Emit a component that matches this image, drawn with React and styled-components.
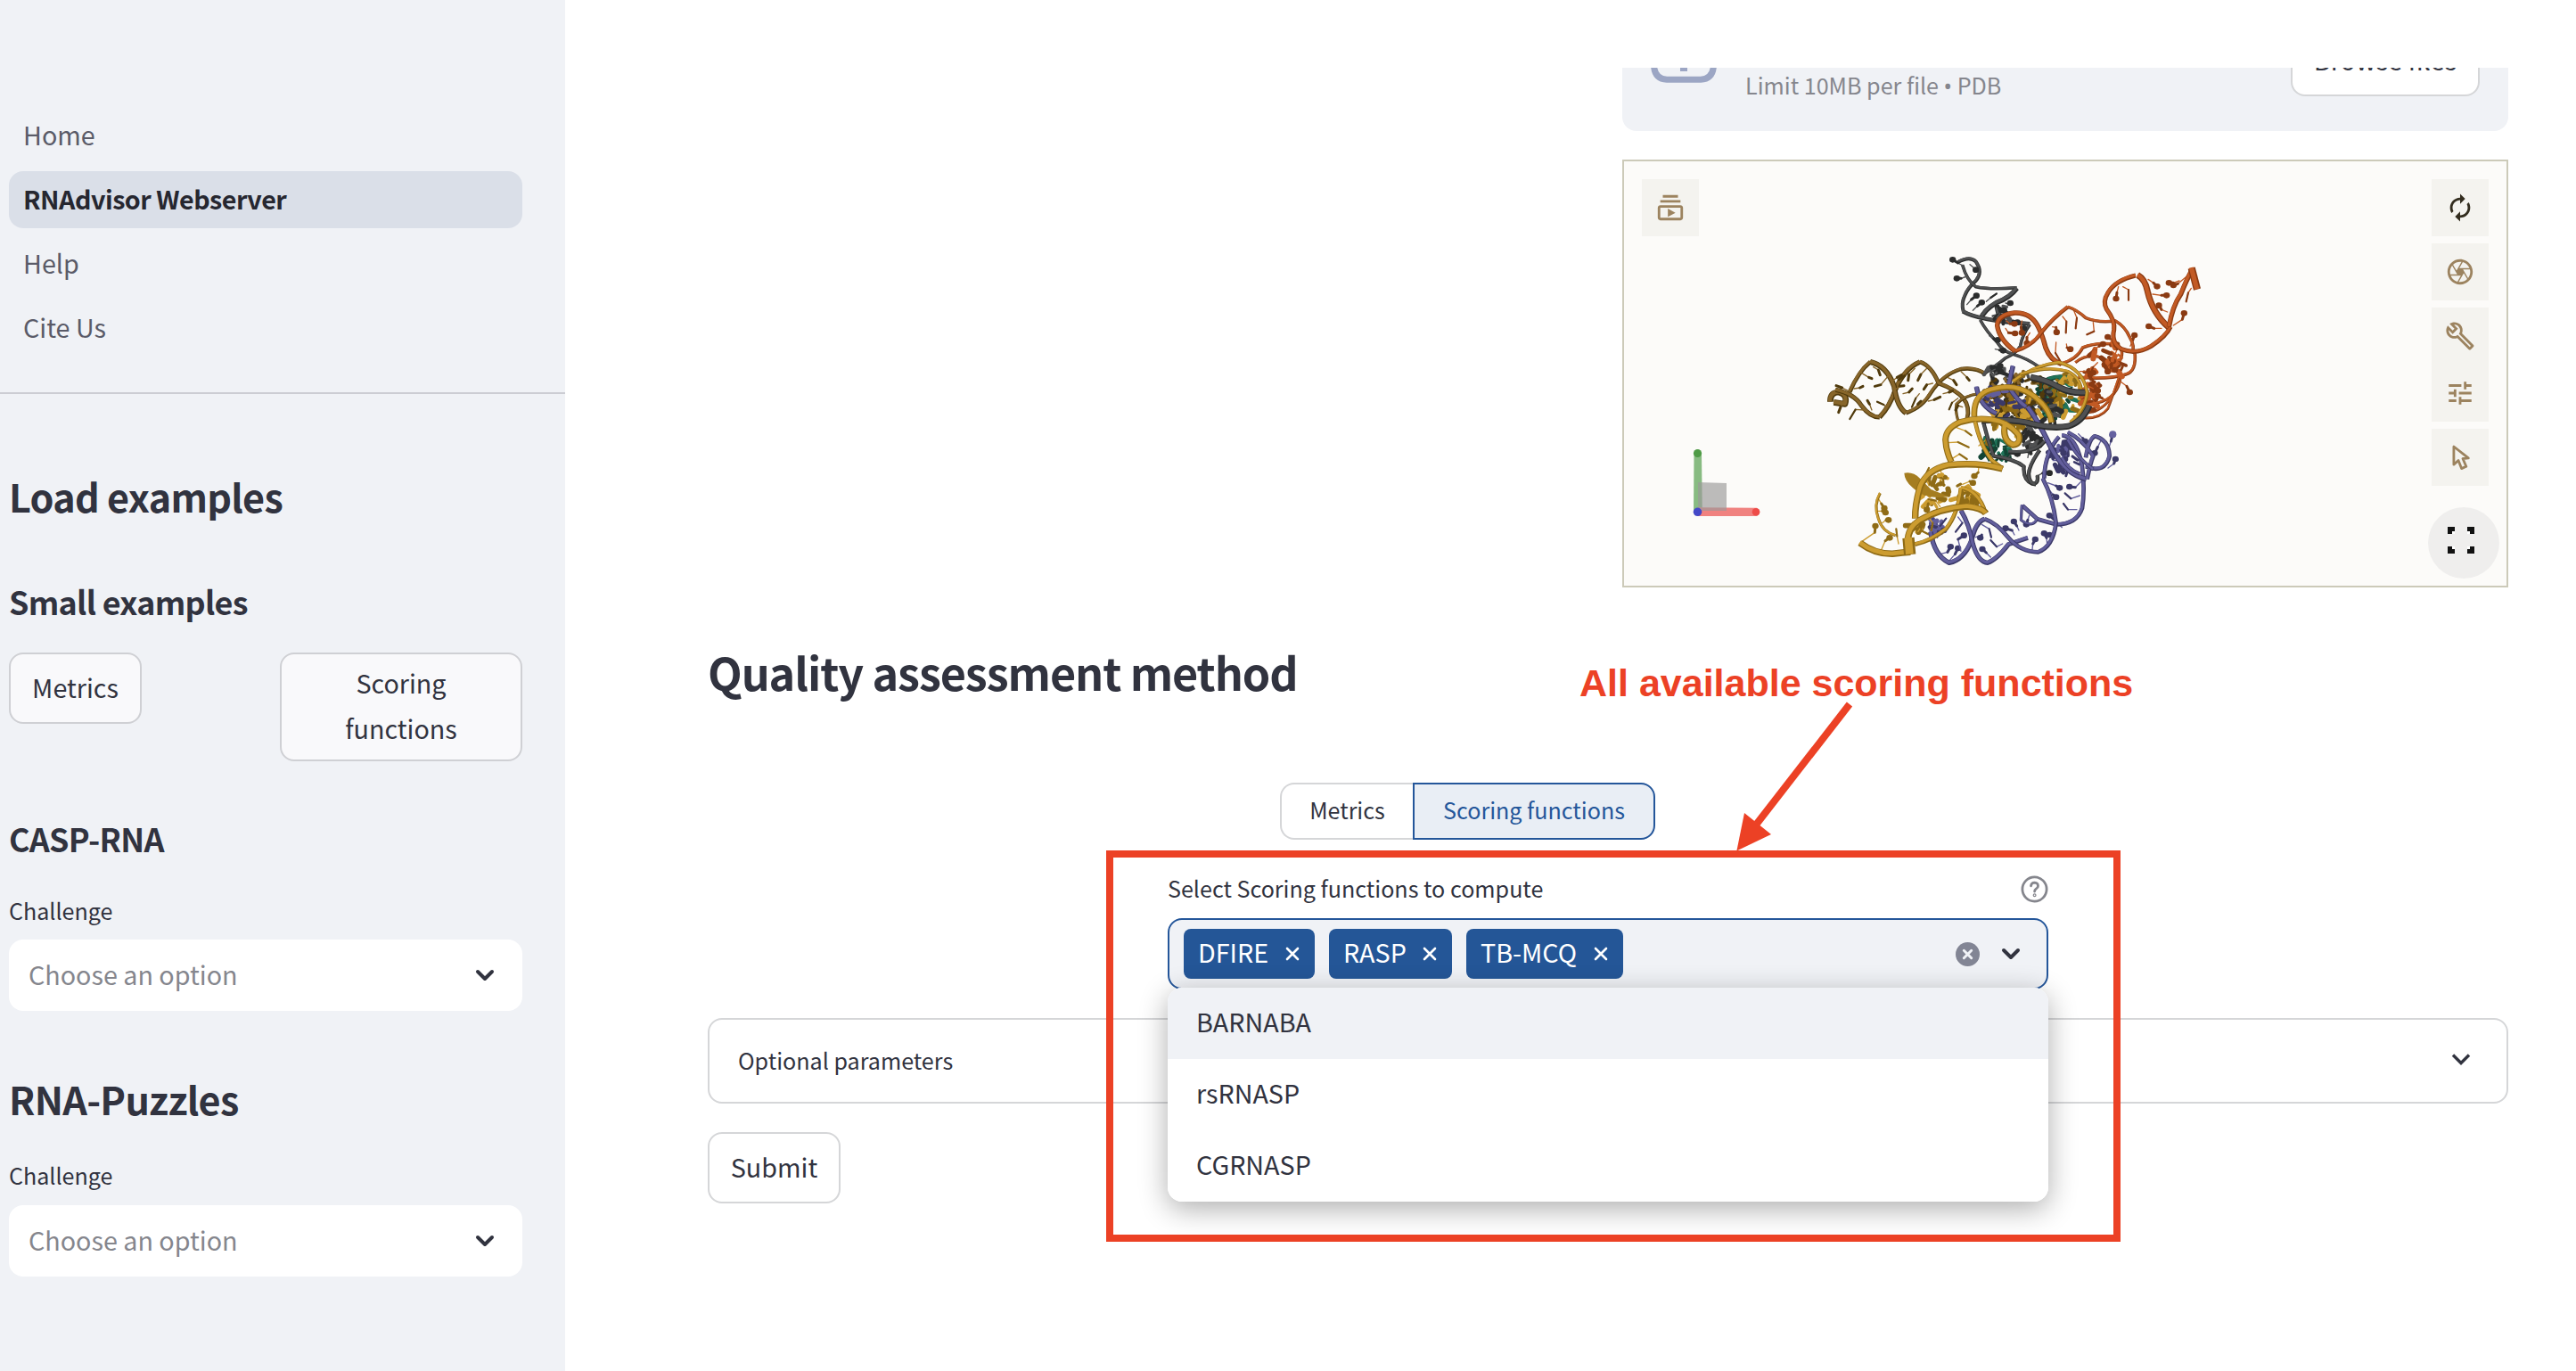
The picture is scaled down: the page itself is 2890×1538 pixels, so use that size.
import React from "react";
import styled, { createGlobalStyle } from "styled-components";
import {
  MdOutlineSubscriptions,
  MdAutorenew,
  MdOutlineCamera,
  MdOutlineBuild,
  MdTune,
} from "react-icons/md";

const ink = "#31333f";
const muted = "#85868d";
const panel = "#f0f2f6";
const blue = "#24569a";
const line = "#d5d6d8";
const red = "#ec4125";

const GlobalStyle = createGlobalStyle`
  *, *::before, *::after { box-sizing: border-box; }
  html, body { margin: 0; padding: 0; background: #fff; }
  body {
    font-family: "Noto Sans CJK SC", "Noto Sans", sans-serif;
    font-size: 28.7px;
    color: ${ink};
    overflow: hidden;
  }
  h1, h2, h3, p { margin: 0; }
  button { font: inherit; color: inherit; margin: 0; }
  svg { display: block; flex: none; }
`;

const Page = styled.div`
  position: relative;
  display: flex;
  width: 2890px;
  height: 1538px;
  overflow: hidden;
`;

/* ---------- sidebar ---------- */

const Sidebar = styled.aside`
  width: 634px;
  flex: none;
  background: ${panel};
  padding-top: 120px;
`;

const Nav = styled.nav`
  display: flex;
  flex-direction: column;
  gap: 8px;
  padding: 0 48px 40px 10px;
  border-bottom: 2px solid #cccdd3;
`;

const NavItem = styled.a`
  height: 64px;
  line-height: 62px;
  padding: 0 16px;
  border-radius: 16px;
  white-space: nowrap;
  color: ${(p) => (p.$active ? "#262730" : "#5a5b68")};
  background: ${(p) => (p.$active ? "#dadfe8" : "transparent")};
  font-weight: ${(p) => (p.$active ? 700 : 400)};
  letter-spacing: ${(p) => (p.$active ? "-0.5px" : "0")};
`;

const SidebarBody = styled.div`
  display: flex;
  flex-direction: column;
  padding: 0 48px 0 10px;
`;

const Heading = styled.h2`
  font-size: ${(p) => p.$size}px;
  line-height: ${(p) => p.$line}px;
  margin-top: ${(p) => p.$top}px;
  letter-spacing: ${(p) => p.$track || -0.72}px;
  font-weight: 700;
  white-space: nowrap;
`;

const Label = styled.label`
  display: block;
  font-size: 25.1px;
  line-height: 40px;
  margin-top: ${(p) => p.$top || 0}px;
  white-space: nowrap;
`;

const ButtonRow = styled.div`
  display: flex;
  justify-content: space-between;
  align-items: flex-start;
  margin-top: 34px;
  height: 122px;
`;

const Button = styled.button`
  flex: none;
  display: flex;
  align-items: center;
  justify-content: center;
  width: ${(p) => p.$width}px;
  height: ${(p) => p.$height || 80}px;
  margin-top: ${(p) => p.$top || 0}px;
  padding: 0 10px 4px;
  line-height: 51px;
  text-align: center;
  white-space: nowrap;
  border: 2px solid ${(p) => (p.$soft ? "#cfd0d4" : line)};
  border-radius: 16px;
  background: ${(p) => (p.$soft ? "#f9f9fb" : "#fff")};
`;

const SelectBox = styled.div`
  display: flex;
  align-items: center;
  justify-content: space-between;
  height: 80px;
  margin-top: ${(p) => p.$top}px;
  padding: 0 31px 0 22px;
  border-radius: 16px;
  background: #fff;
  color: ${muted};
`;

const Lifted = styled.span`
  padding-bottom: ${(p) => p.$by || 4}px;
  white-space: nowrap;
`;

/* ---------- main ---------- */

const Main = styled.main`
  flex: 1;
  display: flex;
  flex-direction: column;
  padding: 76px 76px 0 160px;
`;

const RightColumn = styled.div`
  width: 994px;
  margin-left: auto;
`;

const UploadClip = styled.div`
  height: 71px;
  overflow: hidden;
  display: flex;
  flex-direction: column;
  justify-content: flex-end;
`;

const Uploader = styled.div`
  flex: none;
  display: flex;
  align-items: center;
  height: 158px;
  padding: 0 32px;
  border-radius: 16px;
  background: ${panel};
`;

const UploadHint = styled.span`
  flex: 1;
  margin: 55px 0 0 32px;
  font-size: 25.1px;
  line-height: 38px;
  color: ${muted};
  white-space: nowrap;
`;

const Bullet = styled.span`
  font-family: "Noto Sans", sans-serif;
`;

const Viewer = styled.section`
  position: relative;
  display: flex;
  justify-content: space-between;
  height: 480px;
  margin-top: 32px;
  padding: 20px;
  border: 2px solid #cccab9;
  background: #fcfbf9;
`;

const ToolColumn = styled.div`
  display: flex;
  flex-direction: column;
  gap: 8px;
  align-items: center;
  width: 64px;
`;

const ToolGroup = styled.div`
  flex: none;
  display: flex;
  flex-direction: column;
`;

const Tool = styled.button`
  flex: none;
  display: flex;
  align-items: center;
  justify-content: center;
  width: 64px;
  height: 64px;
  padding: 0;
  border: 0;
  background: #f4f3ef;
  color: ${(p) => (p.$dark ? "#332d1f" : "#9c835f")};
  font-size: 34px;
`;

const RoundTool = styled.button`
  flex: none;
  display: flex;
  align-items: center;
  justify-content: center;
  width: 80px;
  height: 80px;
  margin: 16px 0 0 8px;
  padding: 0 6px 6px 0;
  border: 0;
  border-radius: 50%;
  background: #efeeed;
`;

const Molecule = styled.svg`
  position: absolute;
  left: 198px;
  top: 79px;
`;

const Axes = styled.svg`
  position: absolute;
  left: 58px;
  top: 309px;
`;

const Tabs = styled.div`
  display: flex;
  margin: 91px 0 0 642px;
`;

const Tab = styled.button`
  height: 64px;
  width: ${(p) => p.$width}px;
  padding: 0 0 4px;
  font-size: 25.1px;
  white-space: nowrap;
  color: ${(p) => (p.$active ? blue : ink)};
  background: ${(p) => (p.$active ? "#e9eef5" : "#fff")};
  border: 2px solid ${(p) => (p.$active ? blue : line)};
  border-right-width: ${(p) => (p.$active ? 2 : 0)}px;
  border-radius: ${(p) => (p.$active ? "0 16px 16px 0" : "16px 0 0 16px")};
`;

const Field = styled.div`
  position: relative;
  width: 988px;
  margin: 34px auto 0;
`;

const FieldHead = styled.div`
  display: flex;
  align-items: flex-start;
  justify-content: space-between;
  height: 54px;
`;

const HelpIcon = styled.svg`
  margin: 6px 0 0;
`;

const MultiSelect = styled.div`
  display: flex;
  align-items: center;
  gap: 16px;
  height: 80px;
  padding: 0 29px 0 16px;
  border: 2px solid ${blue};
  border-radius: 16px;
  background: ${panel};
`;

const Tag = styled.span`
  display: flex;
  align-items: center;
  justify-content: space-between;
  width: ${(p) => p.$width}px;
  height: 56px;
  padding: 0 17px 0 16px;
  border-radius: 8px;
  background: #245697;
  color: #fff;
`;

const Controls = styled.span`
  display: flex;
  align-items: center;
  gap: 24px;
  margin-left: auto;
`;

const Menu = styled.ul`
  position: absolute;
  z-index: 2;
  left: 0;
  top: 132px;
  width: 988px;
  margin: 0;
  padding: 0;
  list-style: none;
  border-radius: 16px;
  overflow: hidden;
  background: #fff;
  box-shadow: 0 8px 32px rgba(0, 0, 0, 0.32);
`;

const Option = styled.li`
  height: 80px;
  padding: 0 32px;
  line-height: 75px;
  background: ${(p) => (p.$active ? panel : "#fff")};
`;

const Expander = styled.div`
  display: flex;
  align-items: center;
  justify-content: space-between;
  height: 96px;
  margin-top: 32px;
  padding: 0 40px 0 32px;
  border: 2px solid ${line};
  border-radius: 16px;
  font-size: 25.1px;
`;

/* ---------- annotation overlay ---------- */

const Frame = styled.div`
  position: absolute;
  z-index: 3;
  left: 1241px;
  top: 954px;
  width: 1138px;
  height: 439px;
  border: 8px solid ${red};
`;

const Note = styled.p`
  position: absolute;
  z-index: 3;
  left: 1772px;
  top: 741px;
  font: 700 43px/50px "Liberation Sans", Arial, sans-serif;
  color: ${red};
  white-space: nowrap;
`;

const Arrow = styled.svg`
  position: absolute;
  z-index: 3;
  left: 1940px;
  top: 780px;
`;

/* ---------- icons ---------- */

const Chevron = ({ sharp }) => (
  <svg width="22" height="14" viewBox="0 0 22 14" fill="none" stroke={ink} overflow="visible">
    {sharp ? (
      <path d="M2 0.500l9 9 9-9" strokeWidth="3.4" />
    ) : (
      <path d="M3 3l8 8 8-8" strokeWidth="4" strokeLinecap="round" strokeLinejoin="round" />
    )}
  </svg>
);

const Cross = () => (
  <svg width="16" height="16" viewBox="0 0 16 16" fill="none" stroke="#fff" strokeWidth="2.6" strokeLinecap="round">
    <path d="M2 2l12 12M14 2L2 14" />
  </svg>
);

const ClearIcon = () => (
  <svg width="27" height="27" viewBox="0 0 27 27">
    <circle cx="13.5" cy="13.5" r="13.5" fill="#828594" />
    <path d="M9.3 9.3l8.4 8.4M17.7 9.3l-8.4 8.4" stroke={panel} strokeWidth="3" strokeLinecap="round" />
  </svg>
);

const CloudIcon = () => (
  <svg width="74" height="74" viewBox="0 0 74 74" fill="none" stroke="#9ca6c4" strokeWidth="7">
    <path d="M14 15Q3.500 20 3.500 34v8Q4 57.500 18 58.300h38Q70 57.500 70.500 42v-8Q70 20 60 15" />
    <path d="M37 49V12M24 24l13-13 13 13" strokeWidth="8" />
  </svg>
);

const CursorIcon = () => (
  <svg width="64" height="64" viewBox="0 0 64 64" fill="none" stroke="#9c835f" strokeWidth="2.8" strokeLinejoin="round">
    <path d="M24.900 20V40.200L30 35.500 33.600 44.600 38.800 42.300 35 33.500 41.300 32.800Z" />
  </svg>
);

const FullscreenIcon = () => (
  <svg width="30" height="30" viewBox="0 0 30 30">
    {[
      [0, 0, 5, 5],
      [22, 0, 22, 5],
      [0, 22, 5, 22],
      [22, 22, 22, 22],
    ].map(([x, y, nx, ny]) => (
      <g key={`${x}-${y}`}>
        <rect x={x} y={y} width="8" height="8" fill="#111" />
        <rect x={nx} y={ny} width="3" height="3" fill="#fff" />
      </g>
    ))}
  </svg>
);

/* ---------- molecule drawing ---------- */

const tones = {
  gray: ["#2b2c2c", "#505152"],
  orange: ["#8a3a12", "#c25a24"],
  brown: ["#503a0c", "#87652a"],
  gold: ["#8f6b16", "#cc9c30"],
  purple: ["#3b3968", "#625e9c"],
  green: ["#124534", "#1f7358"],
};

const ribbonsBack = [
  ["green", 14, "M925 640Q970 605 960 545M800 520Q850 470 930 500M640 770Q610 720 625 690"],
  ["gray", 10, "M530 102Q570 80 590 100Q615 135 590 165Q562 190 553 215Q540 240 548 268"],
  ["gray", 9, "M545 112Q560 165 590 185Q640 196 728 188"],
  ["gray", 14, "M728 190Q705 222 660 238Q615 265 606 295"],
  ["gray", 12, "M546 268Q600 300 772 310"],
  ["gray", 9, "M605 297Q625 335 662 372Q680 402 715 412Q770 428 812 462"],
  ["gray", 9, "M772 312Q745 350 740 385Q725 410 690 425Q660 450 612 482"],
  ["brown", 17, "M100 572Q100 540 128 540Q160 548 150 580L112 574"],
  ["brown", 13, "M118 532Q180 545 205 585Q235 625 266 624"],
  ["brown", 12, "M165 540Q195 470 235 438"],
  ["brown", 14, "M266 624Q300 590 320 530Q350 460 402 438"],
  ["brown", 15, "M235 438Q290 450 315 520Q325 590 355 610"],
  ["brown", 11, "M355 610Q410 592 440 540Q480 480 540 462Q590 455 625 480"],
  ["brown", 12, "M402 438Q440 450 465 510Q520 530 548 560Q572 590 560 632"],
  ["brown", 8, "M530 635Q520 600 525 580Q550 552 600 545"],
  ["orange", 8, "M925 440Q960 412 1000 420Q1050 435 1078 485Q1070 560 1000 576L960 575"],
  ["orange", 9, "M1125 405Q1132 470 1095 480Q1040 498 935 490"],
  ["orange", 7, "M1072 490Q1050 555 1035 595Q1000 640 920 622M940 606Q1000 620 1045 560"],
  ["orange", 9, "M875 445Q930 430 950 390Q1000 370 1062 380Q1100 400 1065 450"],
];

const ribbonsMid = [
  ["orange", 14, "M722 402Q668 362 662 315Q665 280 720 273Q775 270 800 320Q815 350 825 390Q840 432 878 445"],
  ["orange", 11, "M722 402Q780 385 810 340Q850 290 900 253"],
  ["orange", 9, "M900 253Q930 262 960 290Q1000 307 1060 300Q1092 318 1108 355Q1128 388 1115 408"],
  ["orange", 13, "M1128 147Q1060 163 1035 205Q1016 235 1030 260Q1060 300 1055 330Q1045 375 1080 395Q1130 415 1180 385Q1232 350 1245 320"],
  ["orange", 18, "M1135 146Q1160 160 1168 200Q1185 275 1240 322"],
  ["orange", 14, "M1240 320Q1252 250 1280 210Q1300 160 1318 128"],
  ["orange", 21, "M1316 122L1335 194"],
  ["gray", 11, "M615 640Q630 700 650 755Q720 765 752 790Q748 835 780 848Q802 850 797 820"],
  ["gray", 11, "M805 735Q770 785 768 815Q770 850 792 850M700 740Q790 748 822 705"],
  ["purple", 14, "M592 522Q605 590 660 612M715 452L700 520Q730 570 760 590"],
  ["purple", 12, "M820 830Q822 745 870 690M880 685Q930 690 948 790Q958 870 948 930Q930 985 860 985L797 967L747 922"],
  ["purple", 15, "M765 590Q802 640 835 710Q885 815 962 833"],
  ["purple", 12, "M965 833Q975 780 985 755Q950 700 900 675M960 790Q1025 815 1040 755Q1038 700 990 688Q970 700 960 760"],
  ["purple", 10, "M900 700Q930 760 985 800M880 760Q900 800 940 815"],
  ["purple", 14, "M438 1010Q450 1090 500 1114Q550 1104 575 1040Q590 975 620 967"],
  ["purple", 13, "M540 938Q568 985 580 1050Q598 1112 630 1114Q660 1104 700 1052L765 1030"],
  ["purple", 12, "M620 967Q660 980 700 1030Q740 1078 800 1078Q850 1060 860 980Q850 895 815 830"],
  ["purple", 8, "M745 920L742 970Q780 1000 797 966"],
];

const ribbonsFront = [
  ["gray", 19, "M775 490Q830 500 870 524Q910 545 962 541"],
  ["gold", 10, "M715 505Q790 447 870 440Q950 460 965 540Q960 600 908 642"],
  ["gold", 9, "M740 480Q830 450 900 470Q940 490 945 530"],
  ["gray", 18, "M610 635Q700 630 760 642Q840 665 900 655Q950 640 972 585"],
  ["gold", 17, "M585 622Q580 550 640 532Q720 508 780 550Q838 590 845 642"],
  ["gold", 18, "M690 640Q675 700 715 718Q742 715 735 685Q700 640 640 632Q590 625 540 640Q490 660 488 700Q490 740 508 775"],
  ["gold", 12, "M588 640Q605 720 645 770L680 797"],
  ["gold", 19, "M680 798Q600 775 500 785Q425 800 402 860Q385 920 386 965"],
  ["gold", 12, "M540 862Q530 950 490 1000Q440 1040 385 1052M540 862Q600 872 622 945"],
  ["gold", 19, "M362 1040Q360 1000 400 972Q470 930 560 924Q612 930 624 948"],
  ["gold", 19, "M200 1047Q250 1085 310 1084Q345 1080 370 1078"],
  ["gold", 34, "M363 1030L368 1086"],
  ["gold", 8, "M268 880Q245 920 262 965Q275 1010 320 1022"],
];

/* Each base is a thin stick followed by a thicker tip. */
const bases = {
  gray: [
    [548, 115, 530, 105, 512, 94], [560, 150, 540, 157, 526, 157], [570, 110, 588, 125, 590, 128],
    [560, 245, 575, 228, 592, 215], [580, 265, 595, 250, 610, 238], [625, 235, 640, 222, 660, 208],
    [690, 240, 700, 243, 706, 240], [660, 290, 675, 270, 685, 264], [700, 310, 715, 300, 730, 305],
    [655, 395, 670, 398, 682, 400], [635, 350, 650, 360, 664, 364], [745, 350, 748, 335, 752, 325],
    [640, 470, 660, 460, 672, 452], [800, 820, 815, 812, 838, 812], [700, 760, 710, 745, 730, 748],
    [765, 760, 775, 700, 790, 690],
  ],
  orange: [
    [1070, 185, 1065, 205, 1062, 225], [1085, 185, 1104, 195, 1104, 230], [1170, 160, 1188, 172, 1200, 184],
    [1185, 210, 1215, 214, 1232, 214], [1275, 165, 1255, 172, 1240, 172], [1300, 150, 1270, 175, 1255, 180],
    [1315, 190, 1305, 205, 1298, 235], [1235, 270, 1215, 262, 1206, 248], [1255, 315, 1285, 295, 1291, 274],
    [1215, 325, 1190, 325, 1172, 318], [985, 305, 988, 335, 964, 346], [882, 285, 895, 302, 893, 340],
    [918, 260, 930, 290, 926, 325], [848, 320, 860, 322, 862, 338], [860, 372, 858, 408, 874, 435],
    [895, 378, 897, 390, 908, 395], [693, 300, 705, 310, 720, 310], [690, 325, 700, 340, 722, 342],
    [745, 300, 742, 320, 745, 340], [772, 340, 762, 355, 762, 375], [1110, 385, 1118, 365, 1124, 348],
    [1055, 375, 1042, 360, 1034, 354], [990, 395, 1005, 385, 1018, 378], [1060, 410, 1065, 395, 1064, 380],
    [1078, 505, 1098, 520, 1108, 540], [1000, 440, 985, 455, 975, 480], [1040, 440, 1030, 455, 1034, 470],
    [1070, 440, 1075, 450, 1058, 465], [940, 470, 965, 470, 985, 475], [1000, 520, 990, 505, 980, 514],
    [1040, 570, 1015, 560, 1000, 553], [970, 520, 990, 530, 1000, 535], [960, 590, 975, 590, 985, 600],
  ],
  brown: [
    [160, 535, 140, 525, 120, 518], [150, 560, 135, 590, 128, 608], [215, 600, 185, 598, 166, 630],
    [205, 475, 230, 490, 240, 494], [245, 455, 262, 465, 268, 482], [180, 528, 200, 525, 210, 520],
    [240, 600, 232, 580, 225, 568], [290, 590, 280, 582, 258, 572], [300, 480, 270, 515, 250, 520],
    [320, 530, 335, 520, 348, 518], [345, 545, 365, 540, 376, 528], [385, 460, 365, 480, 362, 500],
    [425, 460, 405, 480, 395, 500], [445, 510, 425, 515, 415, 530], [380, 600, 395, 580, 405, 570],
    [430, 570, 450, 565, 470, 556], [480, 545, 500, 540, 512, 535], [495, 490, 515, 500, 525, 515],
    [540, 470, 560, 490, 568, 500], [530, 560, 510, 575, 500, 598], [545, 590, 530, 585, 522, 600],
    [400, 545, 388, 560, 375, 590], [312, 500, 325, 490, 340, 482], [355, 470, 350, 485, 330, 498],
  ],
  gold: [
    [495, 710, 530, 708, 566, 725], [500, 770, 535, 748, 560, 765], [515, 655, 555, 670, 575, 685],
    [600, 720, 625, 700, 632, 712], [430, 850, 420, 820, 432, 795], [470, 800, 480, 830, 482, 855],
    [545, 850, 570, 840, 580, 845], [600, 790, 598, 810, 585, 822], [440, 900, 430, 915, 425, 935],
    [260, 895, 272, 915, 282, 930], [255, 940, 275, 940, 286, 945], [275, 980, 288, 970, 296, 970],
    [210, 1040, 250, 1012, 252, 990], [270, 1075, 285, 1040, 300, 1030], [330, 1050, 325, 1025, 322, 1000],
    [395, 1010, 405, 995, 410, 985], [430, 960, 445, 980, 440, 1005], [560, 895, 575, 890, 590, 905],
    [470, 925, 455, 905, 430, 900], [450, 1035, 430, 1018, 405, 1005],
  ],
  purple: [
    [470, 1085, 495, 1078, 505, 1060], [500, 1108, 520, 1085, 530, 1065], [540, 1075, 530, 1035, 550, 1022],
    [530, 960, 545, 980, 522, 1010], [590, 1028, 610, 1020, 605, 1030], [610, 985, 635, 1000, 642, 1028],
    [640, 1095, 625, 1080, 612, 1068], [680, 1050, 660, 1060, 640, 1038], [720, 1020, 712, 1005, 690, 998],
    [735, 1005, 728, 990, 718, 975], [780, 1070, 782, 1050, 790, 1035], [830, 1050, 828, 1030, 820, 1015],
    [858, 1010, 850, 1018, 838, 1020], [880, 995, 855, 970, 838, 955], [930, 935, 900, 935, 885, 915],
    [940, 888, 910, 898, 890, 880], [945, 840, 925, 860, 905, 858], [832, 845, 860, 855, 872, 862],
    [838, 870, 850, 885, 860, 893], [1035, 735, 1045, 705, 1050, 684], [1035, 795, 1055, 780, 1060, 765],
    [935, 680, 950, 695, 958, 705], [1010, 705, 1000, 725, 990, 745], [862, 740, 875, 735, 885, 745],
    [850, 770, 870, 770, 890, 765], [905, 780, 890, 795, 870, 810], [770, 955, 765, 970, 760, 985],
    [460, 1030, 470, 1010, 482, 1005], [450, 985, 470, 990, 490, 965],
  ],
};

const scatter = (tone, seed, count, cx, cy, rx, ry) => {
  let s = seed * 7919;
  const next = () => {
    s = (s * 16807) % 2147483647;
    return s / 2147483647;
  };
  return Array.from({ length: count }, () => {
    const a = next() * Math.PI * 2;
    const r = Math.sqrt(next());
    const x = cx + Math.cos(a) * r * rx;
    const y = cy + Math.sin(a) * r * ry;
    const t = next() * Math.PI;
    const len = 8 + next() * 20;
    return {
      d: `M${x.toFixed(1)} ${y.toFixed(1)}l${(Math.cos(t) * len).toFixed(1)} ${(Math.sin(t) * len).toFixed(1)}`,
      color: tones[tone][next() > 0.6 ? 1 : 0],
      width: 7 + next() * 12,
    };
  });
};

const core = [
  ...scatter("green", 31, 44, 865, 550, 58, 74),
  ...scatter("green", 77, 26, 665, 735, 48, 38),
  ...scatter("gray", 11, 55, 740, 570, 118, 96),
  ...scatter("brown", 5, 66, 735, 540, 112, 74),
  ...scatter("gold", 19, 40, 715, 600, 88, 66),
  ...scatter("gold", 203, 30, 895, 540, 52, 66),
  ...scatter("purple", 41, 16, 680, 570, 80, 60),
  ...scatter("gray", 57, 18, 780, 690, 40, 40),
  ...scatter("gray", 58, 14, 840, 590, 30, 60),
  ...scatter("orange", 91, 32, 978, 520, 38, 64),
  ...scatter("orange", 131, 16, 1035, 410, 54, 40),
  ...scatter("orange", 132, 10, 1060, 450, 26, 30),
  ...scatter("purple", 61, 24, 885, 755, 45, 50),
  ...scatter("gold", 301, 30, 455, 870, 52, 60),
  ...scatter("gold", 302, 10, 545, 880, 40, 40),
  ...scatter("gold", 401, 16, 560, 900, 46, 24),
  ...scatter("gold", 402, 8, 395, 1000, 26, 20),
  ...scatter("purple", 501, 12, 455, 990, 34, 26),
  ...scatter("gray", 601, 12, 680, 270, 30, 22),
  ...scatter("gray", 602, 14, 655, 465, 34, 16),
];

const Ribbons = ({ list }) =>
  list.map(([tone, width, d]) => (
    <g key={d} fill="none" strokeLinejoin="round">
      <path d={d} stroke={tones[tone][0]} strokeWidth={width * 1.18} />
      <path d={d} stroke={tones[tone][1]} strokeWidth={width * 0.75} transform="translate(-1 -1.500)" />
    </g>
  ));

const Bases = () =>
  Object.entries(bases).map(([tone, list]) => (
    <g key={tone} fill="none" strokeLinecap="round" strokeLinejoin="round">
      {list.map(([a, b, c, d, e, f]) => {
        const short = Math.hypot(e - c, f - d) < 24;
        return (
          <g key={`${a}-${b}-${e}`}>
            <path d={`M${a} ${b}L${c} ${d}L${e} ${f}`} stroke={tones[tone][1]} strokeWidth="4" />
            <path d={`M${c} ${d}L${e} ${f}`} stroke={tones[tone][0]} strokeWidth={short ? 9 : 6.5} />
            {short && tone !== "brown" && <ellipse cx={e} cy={f} rx="11" ry="10" fill={tones[tone][0]} />}
          </g>
        );
      })}
    </g>
  ));

const MoleculeDrawing = () => (
  <Molecule width="480" height="390" viewBox="0 0 1440 1170">
    <Ribbons list={ribbonsBack} />
    <g strokeLinecap="round">
      {core.map((c) => (
        <path key={c.d} d={c.d} stroke={c.color} strokeWidth={c.width} />
      ))}
    </g>
    <Bases />
    <Ribbons list={ribbonsMid} />
    <path d="M349 812Q378 806 402 830L440 868 498 890Q420 905 378 862Q350 838 349 812Z" fill="#a57d20" />
    <Ribbons list={ribbonsFront} />
    <circle cx="1051" cy="682" r="12" fill="#6561a0" />
  </Molecule>
);

const AxesDrawing = () => (
  <Axes width="110" height="100" viewBox="0 0 110 100">
    <path d="M20.500 18.500Q24.500 10 29 18.500L29.800 84H20Z" fill="#88bb82" />
    <path d="M25 79.300L91 79.800Q98 84.500 91 89L25 89Z" fill="#f08280" />
    <path d="M25 51L57 52V83H25Z" fill="#9b9a9a" fillOpacity="0.66" />
    <circle cx="24.500" cy="18.500" r="4.600" fill="#4f9b46" />
    <circle cx="90" cy="84.300" r="4.300" fill="#ee4b48" />
    <circle cx="24.500" cy="84.300" r="4.800" fill="#4448c8" />
  </Axes>
);

/* ---------- data ---------- */

const navItems = ["Home", "RNAdvisor Webserver", "Help", "Cite Us"];
const tags = [
  ["DFIRE", 147],
  ["RASP", 138],
  ["TB-MCQ", 176],
];
const options = ["BARNABA", "rsRNASP", "CGRNASP"];

const ChallengeSelect = ({ top }) => (
  <>
    <Label $top={37}>Challenge</Label>
    <SelectBox $top={top}>
      <Lifted>Choose an option</Lifted>
      <Chevron />
    </SelectBox>
  </>
);

export default function App() {
  return (
    <Page>
      <GlobalStyle />
      <Sidebar>
        <Nav>
          {navItems.map((item) => (
            <NavItem key={item} $active={item === "RNAdvisor Webserver"}>
              {item}
            </NavItem>
          ))}
        </Nav>
        <SidebarBody>
          <Heading $size={43.1} $line={58} $top={85}>Load examples</Heading>
          <Heading as="h3" $size={35.9} $line={48} $top={65}>Small examples</Heading>
          <ButtonRow>
            <Button $soft $width={149}>Metrics</Button>
            <Button $soft $width={272} $height={122}>
              Scoring
              <br />
              functions
            </Button>
          </ButtonRow>
          <Heading as="h3" $size={35.9} $line={48} $top={62}>CASP-RNA</Heading>
          <ChallengeSelect top={13} />
          <Heading $size={43.1} $line={58} $top={69}>RNA-Puzzles</Heading>
          <ChallengeSelect top={14} />
        </SidebarBody>
      </Sidebar>

      <Main>
        <RightColumn>
          <UploadClip>
            <Uploader>
              <CloudIcon />
              <UploadHint>
                Limit 10MB per file <Bullet>•</Bullet> PDB
              </UploadHint>
              <Button $width={212}>Browse files</Button>
            </Uploader>
          </UploadClip>
          <Viewer>
            <MoleculeDrawing />
            <AxesDrawing />
            <ToolColumn>
              <Tool><MdOutlineSubscriptions /></Tool>
            </ToolColumn>
            <ToolColumn>
              <Tool $dark><MdAutorenew /></Tool>
              <Tool><MdOutlineCamera /></Tool>
              <ToolGroup>
                <Tool><MdOutlineBuild /></Tool>
                <Tool><MdTune /></Tool>
              </ToolGroup>
              <Tool><CursorIcon /></Tool>
              <RoundTool><FullscreenIcon /></RoundTool>
            </ToolColumn>
          </Viewer>
        </RightColumn>

        <Heading as="h1" $size={50.3} $line={68} $top={60} $track={-1.08}>Quality assessment method</Heading>

        <Tabs>
          <Tab $width={149}>Metrics</Tab>
          <Tab $width={272} $active>Scoring functions</Tab>
        </Tabs>

        <Field>
          <FieldHead>
            <Label>Select Scoring functions to compute</Label>
            <HelpIcon width="31" height="31" viewBox="0 0 31 31" fill="none" stroke={muted} strokeWidth="2.8" strokeLinecap="round">
              <circle cx="15.500" cy="15.500" r="13.600" />
              <path d="M11.500 11.800Q12 8.200 15.600 8.200 19.500 8.400 19.500 11.800 19.400 13.800 17.300 15.100 15.600 16.300 15.600 18" />
              <circle cx="15.600" cy="22.300" r="0.600" />
            </HelpIcon>
          </FieldHead>
          <MultiSelect>
            {tags.map(([name, width]) => (
              <Tag key={name} $width={width}>
                <Lifted $by={6}>{name}</Lifted>
                <Cross />
              </Tag>
            ))}
            <Controls>
              <ClearIcon />
              <Chevron />
            </Controls>
          </MultiSelect>
          <Menu>
            {options.map((name, i) => (
              <Option key={name} $active={i === 0}>{name}</Option>
            ))}
          </Menu>
        </Field>

        <Expander>
          <Lifted $by={3}>Optional parameters</Lifted>
          <Chevron sharp />
        </Expander>
        <Button $width={149} $top={32}>Submit</Button>
      </Main>

      <Frame />
      <Note>All available scoring functions</Note>
      <Arrow width="150" height="180" viewBox="0 0 150 180">
        <path d="M135 10L31 144" stroke={red} strokeWidth="8" />
        <path d="M8.400 174.500L17 132 47 156Z" fill={red} />
      </Arrow>
    </Page>
  );
}
